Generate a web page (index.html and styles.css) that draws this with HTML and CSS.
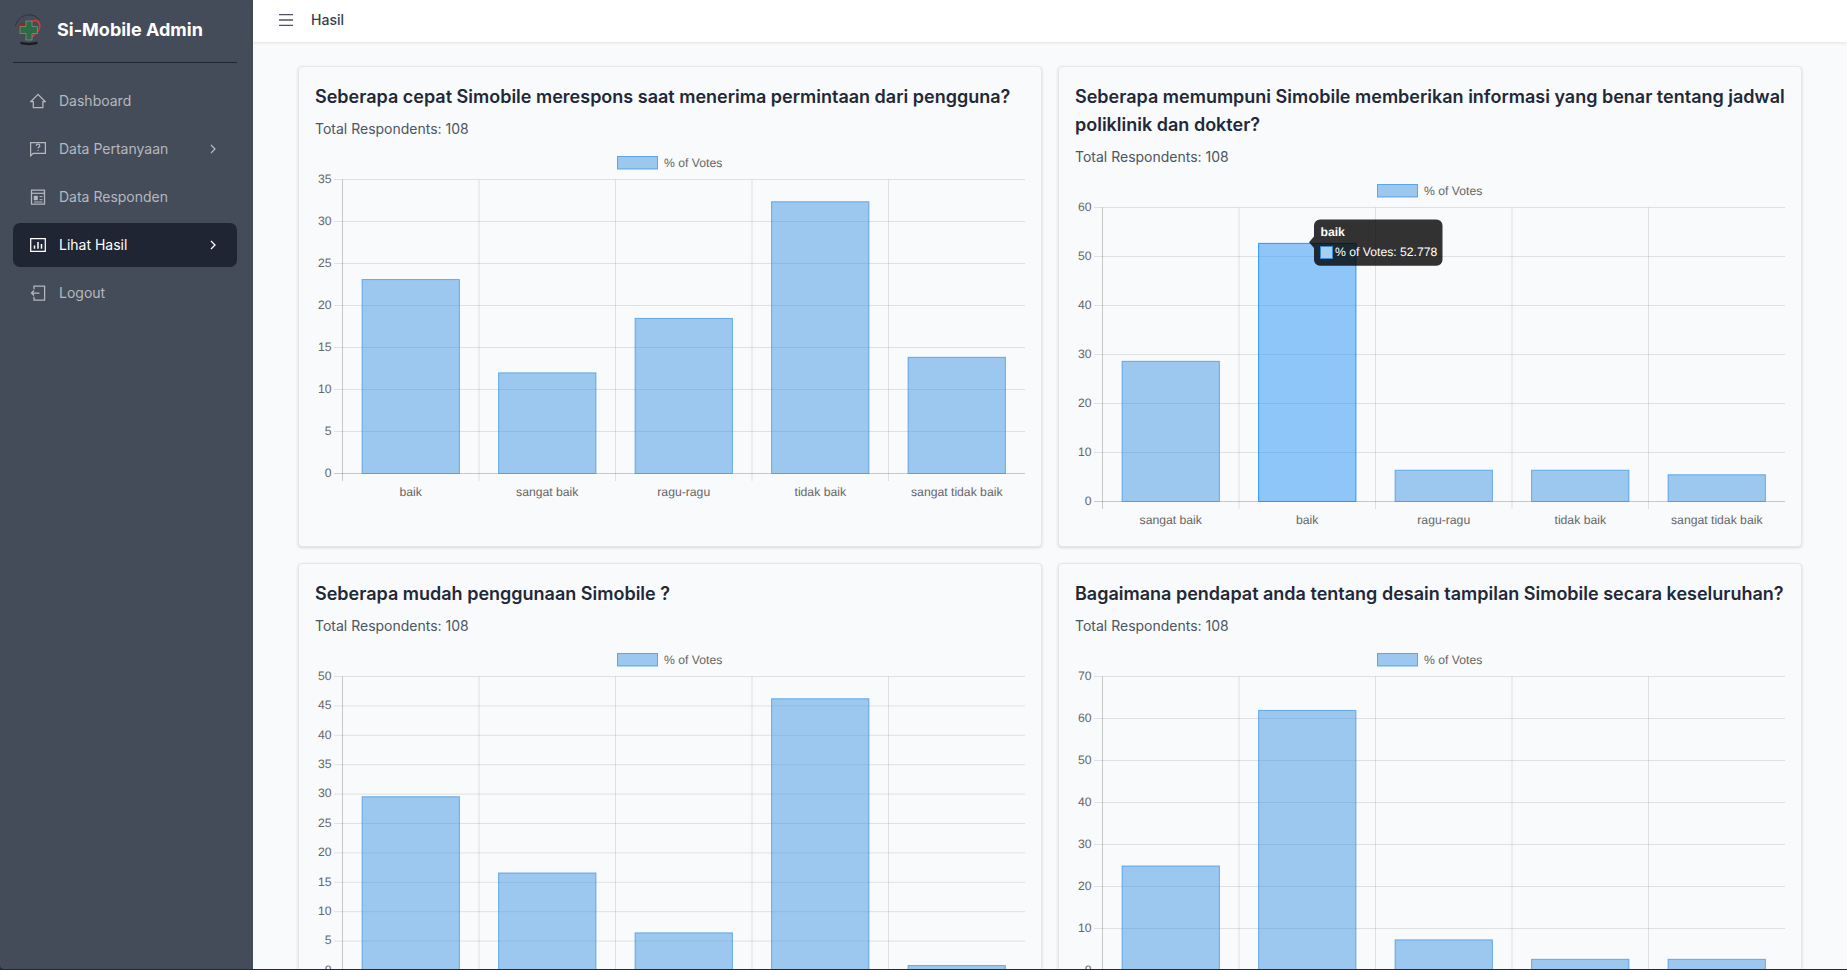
FILE: index.html
```html
<!DOCTYPE html>
<html lang="id">
<head>
<meta charset="utf-8">
<title>Hasil - Si-Mobile Admin</title>
<link rel="stylesheet" href="styles.css">
</head>
<body>
<div class="app">
  <aside class="sidebar">
    <div class="brand">
      <svg class="logo" viewBox="14 13 30 34" aria-hidden="true">
        <path class="logo-ring" d="M15.500 26A14 14 0 0 1 40 20"/>
        <path class="logo-heart-fill" d="M28.500 39 20.500 32C17 28 18 24 22 23 24.500 22.500 26 23.500 27.500 25L29 25Z"/>
        <path class="logo-heart-line" d="M29.500 39.500 38 31C41.500 26.500 39.500 21 35.500 20.500 33.500 20.300 32.500 21 31.500 22"/>
        <path class="logo-cross" d="M26 21H32V26.500H37.500V33.500H32V40H26V33.500H20V26.500H26Z"/>
        <path class="logo-banner" d="M20.500 41.500C25 43 33 43 37.500 41.500V44C33 45.500 25 45.500 20.500 44Z"/>
      </svg>
      <span class="brand-name">Si-Mobile Admin</span>
    </div>
    <nav class="nav">
      <a class="nav-item">
        <svg class="nav-icon" viewBox="0 0 16 16"><path d="M.7 8.700 8 1.300 15.300 8.700H12.900V14.600H3.300V8.700Z"/></svg>
        <span class="nav-label">Dashboard</span>
      </a>
      <a class="nav-item">
        <svg class="nav-icon" viewBox="0 0 16 16"><path d="M.6 1.500H15.400V12.400H3.200L.6 14.800Z"/><path d="M6.200 4.800C6.300 3.700 7 3.200 8 3.200 9.100 3.200 9.800 3.800 9.800 4.700 9.800 6 8 6 8 7.500M8 9V10"/></svg>
        <span class="nav-label">Data Pertanyaan</span>
        <svg class="chevron" viewBox="0 0 6 10"><path d="M1 1 5 5 1 9"/></svg>
      </a>
      <a class="nav-item">
        <svg class="nav-icon" viewBox="0 0 16 16"><path d="M1.500 1H14.500V15H1.500Z"/><path d="M1.500 4.300H14.500" /><path class="nav-solid" d="M4 7H7.500V11H4Z"/><path d="M9.500 7.600H12.500M9.500 10.700H12.500M4 13H12.500" class="nav-thin"/></svg>
        <span class="nav-label">Data Responden</span>
      </a>
      <a class="nav-item is-active">
        <svg class="nav-icon" viewBox="0 0 16 16"><path d="M.7 1.700H15.300V14.300H.7Z"/><path class="nav-bars" d="M4.500 8.500V11.800M8 5V11.800M11.500 7V11.800"/></svg>
        <span class="nav-label">Lihat Hasil</span>
        <svg class="chevron" viewBox="0 0 6 10"><path d="M1 1 5 5 1 9"/></svg>
      </a>
      <a class="nav-item">
        <svg class="nav-icon" viewBox="0 0 16 16"><path d="M4 4.200V1H14.600V15H4V11.800"/><path d="M9.500 8H1.600M4 5.500 1.500 8 4 10.500"/></svg>
        <span class="nav-label">Logout</span>
      </a>
    </nav>
  </aside>

  <div class="content">
    <header class="topbar">
      <svg class="menu-icon" viewBox="0 0 14 12"><path d="M0 .7H14M0 6H14M0 11.300H14"/></svg>
      <span class="page-title">Hasil</span>
    </header>

    <main class="main">
      <div class="grid">

        <section class="card">
          <h2 class="card-title">Seberapa cepat Simobile merespons saat menerima permintaan dari pengguna?</h2>
          <p class="card-meta">Total Respondents: 108</p>
          <svg class="chart" viewBox="0 0 710 355">
            <rect class="legend-box" x="302.500" y="9.500" width="40" height="12.500"/>
            <text class="legend-text" x="349" y="15.900">% of Votes</text>
            <path class="gridline" d="M164 32.500V334M300.500 32.500V334M437 32.500V334M573.500 32.500V334"/>
            <path class="gridline" d="M19 32.500H710M19 74.500H710M19 116.500H710M19 158.500H710M19 200.500H710M19 242.500H710M19 284.500H710"/>
            <path class="axisline" d="M27.500 32.500V334M19 326.500H710"/>
            <g class="ytick">
              <text x="16.500" y="32.500">35</text><text x="16.500" y="74.500">30</text><text x="16.500" y="116.500">25</text><text x="16.500" y="158.500">20</text><text x="16.500" y="200.500">15</text><text x="16.500" y="242.500">10</text><text x="16.500" y="284.500">5</text><text x="16.500" y="326.500">0</text>
            </g>
            <rect class="bar" x="47.110" y="132.560" width="97.280" height="193.940"/>
            <rect class="bar" x="183.610" y="225.890" width="97.280" height="100.610"/>
            <rect class="bar" x="320.110" y="171.440" width="97.280" height="155.060"/>
            <rect class="bar" x="456.610" y="54.780" width="97.280" height="271.720"/>
            <rect class="bar" x="593.110" y="210.330" width="97.280" height="116.170"/>
            <g class="xtick">
              <text x="95.750" y="344.700">baik</text><text x="232.250" y="344.700">sangat baik</text><text x="368.750" y="344.700">ragu-ragu</text><text x="505.250" y="344.700">tidak baik</text><text x="641.750" y="344.700">sangat tidak baik</text>
            </g>
          </svg>
        </section>

        <section class="card">
          <h2 class="card-title">Seberapa memumpuni Simobile memberikan informasi yang benar tentang jadwal poliklinik dan dokter?</h2>
          <p class="card-meta">Total Respondents: 108</p>
          <svg class="chart" viewBox="0 0 710 355">
            <rect class="legend-box" x="302.500" y="9.500" width="40" height="12.500"/>
            <text class="legend-text" x="349" y="15.900">% of Votes</text>
            <path class="gridline" d="M164 32.500V334M300.500 32.500V334M437 32.500V334M573.500 32.500V334"/>
            <path class="gridline" d="M19 32.500H710M19 81.500H710M19 130.500H710M19 179.500H710M19 228.500H710M19 277.500H710"/>
            <path class="axisline" d="M27.500 32.500V334M19 326.500H710"/>
            <g class="ytick">
              <text x="16.500" y="32.500">60</text><text x="16.500" y="81.500">50</text><text x="16.500" y="130.500">40</text><text x="16.500" y="179.500">30</text><text x="16.500" y="228.500">20</text><text x="16.500" y="277.500">10</text><text x="16.500" y="326.500">0</text>
            </g>
            <rect class="bar" x="47.110" y="186.350" width="97.280" height="140.150"/>
            <rect class="bar bar-hover" x="183.610" y="68.400" width="97.280" height="258.100"/>
            <rect class="bar" x="320.110" y="295.240" width="97.280" height="31.260"/>
            <rect class="bar" x="456.610" y="295.240" width="97.280" height="31.260"/>
            <rect class="bar" x="593.110" y="299.780" width="97.280" height="26.720"/>
            <g class="xtick">
              <text x="95.750" y="344.700">sangat baik</text><text x="232.250" y="344.700">baik</text><text x="368.750" y="344.700">ragu-ragu</text><text x="505.250" y="344.700">tidak baik</text><text x="641.750" y="344.700">sangat tidak baik</text>
            </g>
            <g class="tooltip">
              <path class="tooltip-bg" d="M245 44.500H361.500A6 6 0 0 1 367.500 50.500V84.700A6 6 0 0 1 361.500 90.700H245A6 6 0 0 1 239 84.700V73L234 67.300 239 61.500V50.500A6 6 0 0 1 245 44.500Z"/>
              <text class="tooltip-title" x="245.500" y="56.500">baik</text>
              <rect class="tooltip-swatch" x="245.500" y="71.500" width="12" height="12"/>
              <text class="tooltip-text" x="260" y="76.500">% of Votes: 52.778</text>
            </g>
          </svg>
        </section>

        <section class="card">
          <h2 class="card-title">Seberapa mudah penggunaan Simobile ?</h2>
          <p class="card-meta">Total Respondents: 108</p>
          <svg class="chart" viewBox="0 0 710 355">
            <rect class="legend-box" x="302.500" y="9.500" width="40" height="12.500"/>
            <text class="legend-text" x="349" y="15.900">% of Votes</text>
            <path class="gridline" d="M164 32.500V334M300.500 32.500V334M437 32.500V334M573.500 32.500V334"/>
            <path class="gridline" d="M19 32.500H710M19 61.900H710M19 91.300H710M19 120.700H710M19 150.100H710M19 179.500H710M19 208.900H710M19 238.300H710M19 267.700H710M19 297.100H710"/>
            <path class="axisline" d="M27.500 32.500V334M19 326.500H710"/>
            <g class="ytick">
              <text x="16.500" y="32.500">50</text><text x="16.500" y="61.900">45</text><text x="16.500" y="91.300">40</text><text x="16.500" y="120.700">35</text><text x="16.500" y="150.100">30</text><text x="16.500" y="179.500">25</text><text x="16.500" y="208.900">20</text><text x="16.500" y="238.300">15</text><text x="16.500" y="267.700">10</text><text x="16.500" y="297.100">5</text><text x="16.500" y="326.500">0</text>
            </g>
            <rect class="bar" x="47.110" y="152.780" width="97.280" height="173.720"/>
            <rect class="bar" x="183.610" y="229" width="97.280" height="97.500"/>
            <rect class="bar" x="320.110" y="288.890" width="97.280" height="37.610"/>
            <rect class="bar" x="456.610" y="54.780" width="97.280" height="271.720"/>
            <rect class="bar" x="593.110" y="321.560" width="97.280" height="4.940"/>
          </svg>
        </section>

        <section class="card">
          <h2 class="card-title">Bagaimana pendapat anda tentang desain tampilan Simobile secara keseluruhan?</h2>
          <p class="card-meta">Total Respondents: 108</p>
          <svg class="chart" viewBox="0 0 710 355">
            <rect class="legend-box" x="302.500" y="9.500" width="40" height="12.500"/>
            <text class="legend-text" x="349" y="15.900">% of Votes</text>
            <path class="gridline" d="M164 32.500V334M300.500 32.500V334M437 32.500V334M573.500 32.500V334"/>
            <path class="gridline" d="M19 32.500H710M19 74.500H710M19 116.500H710M19 158.500H710M19 200.500H710M19 242.500H710M19 284.500H710"/>
            <path class="axisline" d="M27.500 32.500V334M19 326.500H710"/>
            <g class="ytick">
              <text x="16.500" y="32.500">70</text><text x="16.500" y="74.500">60</text><text x="16.500" y="116.500">50</text><text x="16.500" y="158.500">40</text><text x="16.500" y="200.500">30</text><text x="16.500" y="242.500">20</text><text x="16.500" y="284.500">10</text><text x="16.500" y="326.500">0</text>
            </g>
            <rect class="bar" x="47.110" y="222" width="97.280" height="104.500"/>
            <rect class="bar" x="183.610" y="66.440" width="97.280" height="260.060"/>
            <rect class="bar" x="320.110" y="295.890" width="97.280" height="30.610"/>
            <rect class="bar" x="456.610" y="315.330" width="97.280" height="11.170"/>
            <rect class="bar" x="593.110" y="315.330" width="97.280" height="11.170"/>
          </svg>
        </section>

      </div>
    </main>
  </div>
</div>
</body>
</html>
```

FILE: styles.css
```css
* { box-sizing: border-box; }

html, body {
  height: 100%;
  margin: 0;
  overflow: hidden;
}

body {
  background: #2a2a2c;
  font-family: Inter, "Noto Sans", sans-serif;
  color: #1f2937;
}

.app {
  display: flex;
  height: calc(100vh - 1px);
  overflow: hidden;
}

/* Sidebar */
.sidebar {
  flex: 0 0 253px;
  background: #454c59;
  padding: 0 16px 0 13px;
  border-bottom-left-radius: 4px;
}

.brand {
  display: flex;
  align-items: center;
  gap: 13px;
  height: 63px;
  padding: 0 0 3px 1px;
  border-bottom: 1px solid #1f2533;
}

.logo {
  width: 30px;
  height: 34px;
  flex: none;
  margin-top: 1px;
}

.logo-ring { fill: none; stroke: #23262e; stroke-width: 1; stroke-dasharray: 1.5 .6; }
.logo-heart-fill { fill: #8a2b22; }
.logo-heart-line { fill: none; stroke: #e0382a; stroke-width: 1.500; }
.logo-cross { fill: #2c6b45; stroke: #8fa394; stroke-width: .6; }
.logo-banner { fill: #1a1c22; }

.brand-name {
  color: #fff;
  font-size: 18px;
  font-weight: 700;
  line-height: 28px;
  white-space: nowrap;
}

.nav {
  display: flex;
  flex-direction: column;
  gap: 4px;
  margin-top: 16px;
}

.nav-item {
  display: flex;
  align-items: center;
  height: 44px;
  padding: 0 21px 0 17px;
  border-radius: 7px;
  color: #b4b8bf;
  font-size: 14px;
  font-weight: 400;
  line-height: 20px;
}

.nav-item.is-active {
  background: #1f2533;
  color: #fff;
}

.nav-icon {
  width: 16px;
  height: 16px;
  flex: none;
  margin-right: 13px;
  fill: none;
  stroke: currentColor;
  stroke-width: 1.250;
}

.nav-solid { fill: currentColor; stroke-width: .5; }
.nav-thin { stroke-width: 1; }
.nav-bars { stroke-width: 1.500; }

.nav-label { flex: 1; white-space: nowrap; }

.chevron {
  width: 6px;
  height: 10px;
  flex: none;
  fill: none;
  stroke: currentColor;
  stroke-width: 1.300;
}

/* Top bar and main */
.content {
  flex: 1;
  min-width: 0;
  display: flex;
  flex-direction: column;
  background: #f9fafb;
}

.topbar {
  flex: 0 0 42px;
  display: flex;
  align-items: center;
  gap: 18px;
  padding: 0 0 2px 26px;
  background: #fff;
  box-shadow: 0 1px 3px rgba(0, 0, 0, .1);
  position: relative;
}

.menu-icon {
  width: 14px;
  height: 12px;
  flex: none;
  fill: none;
  stroke: #4b5563;
  stroke-width: 1.300;
}

.page-title {
  color: #374151;
  font-size: 14px;
  font-weight: 500;
  line-height: 20px;
}

.main {
  flex: 1;
  min-height: 0;
  overflow: hidden;
  padding: 24px 45px;
}

.grid {
  display: grid;
  grid-template-columns: 1fr 1fr;
  gap: 16px;
}

.card {
  padding: 16px;
  background: #f9fafb;
  border: 1px solid #e5e7eb;
  border-radius: 4px;
  box-shadow: 0 1px 3px rgba(0, 0, 0, .14);
}

.card-title {
  margin: 0 0 8px;
  color: #1f2937;
  font-size: 18px;
  font-weight: 600;
  line-height: 28px;
}

.card-meta {
  margin: 0 0 8px;
  color: #4b5563;
  font-size: 14px;
  line-height: 20px;
}

/* Charts */
.chart {
  display: block;
  width: 710px;
  height: 355px;
  overflow: visible;
  font-family: "Liberation Sans", Arial, sans-serif;
  font-size: 12.2px;
  text-rendering: geometricPrecision;
}

.gridline { fill: none; stroke: rgba(0, 0, 0, .1); stroke-width: 1; }
.axisline { fill: none; stroke: rgba(0, 0, 0, .2); stroke-width: 1; }

.ytick { transform: translateY(-.7px); }

.ytick text {
  fill: #666;
  text-anchor: end;
  dominant-baseline: central;
}

.xtick text {
  fill: #666;
  text-anchor: middle;
  dominant-baseline: central;
}

.bar {
  fill: rgba(64, 150, 230, .5);
  stroke: rgba(54, 145, 230, .7);
  stroke-width: 1;
}

.bar-hover {
  fill: rgba(54, 155, 250, .55);
  stroke: rgba(40, 145, 245, .95);
}

.legend-box {
  fill: rgba(64, 150, 230, .5);
  stroke: rgba(54, 145, 230, .75);
  stroke-width: 1;
}

.legend-text {
  fill: #666;
  dominant-baseline: central;
}

.tooltip-bg { fill: rgba(0, 0, 0, .8); }

.tooltip-title {
  fill: #fff;
  font-weight: 700;
  dominant-baseline: central;
}

.tooltip-text {
  fill: #fff;
  dominant-baseline: central;
}

.tooltip-swatch {
  fill: #a6cff3;
  stroke: #3a8ad6;
  stroke-width: 1;
}
```
